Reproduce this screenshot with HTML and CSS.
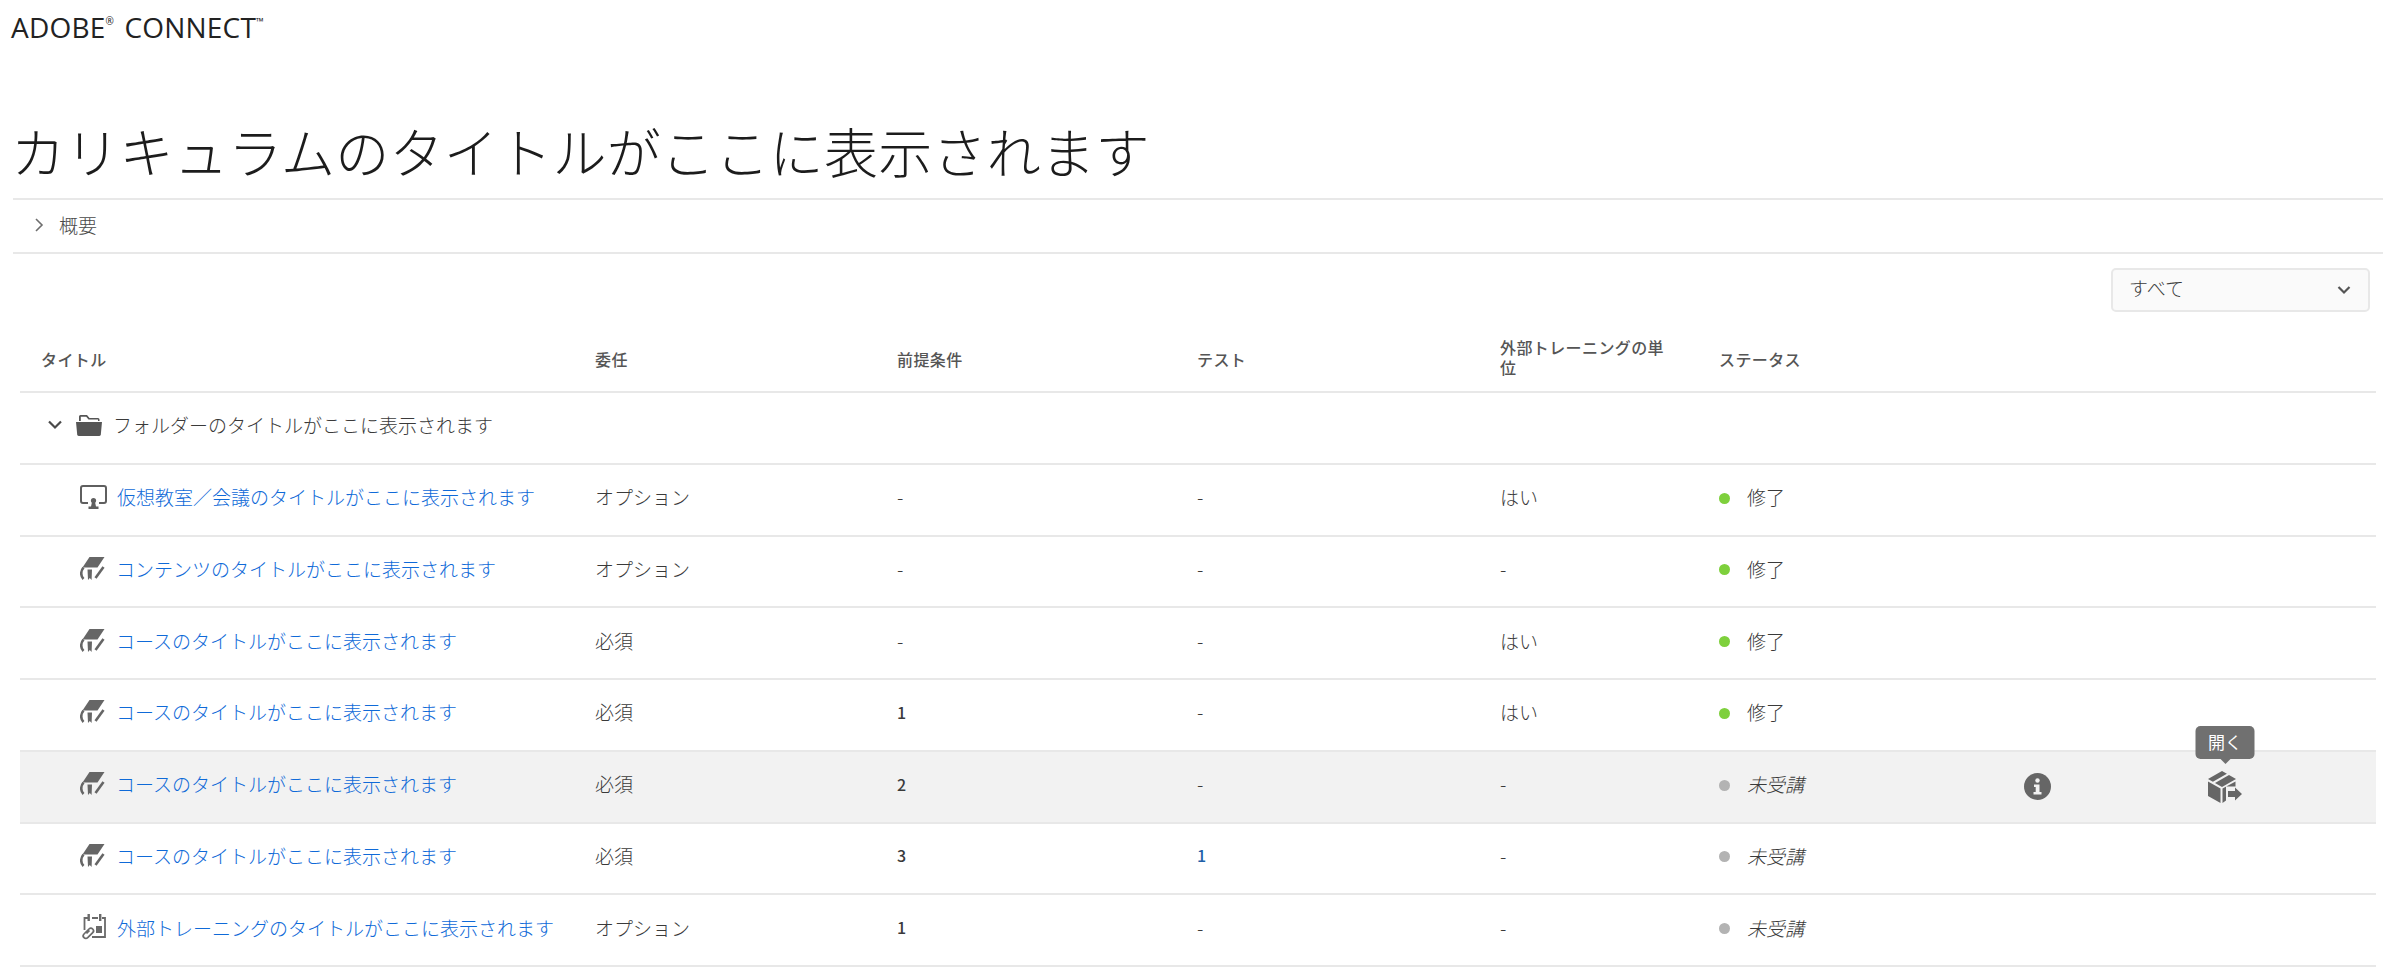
FILE: index.html
```html
<!DOCTYPE html>
<html lang="ja">
<head>
<meta charset="utf-8">
<title>Adobe Connect</title>
<link rel="stylesheet" href="styles.css">
</head>
<body>
<svg class="defs" width="0" height="0" aria-hidden="true">
  <symbol id="book" viewBox="0 0 25 25">
    <path d="M9.500 1H24.500l-7 10.500H2.500z" fill="#666"/>
    <path d="M3.500 11.500C.5 15 .5 20 3.500 23" fill="none" stroke="#666" stroke-width="2.600"/>
    <path d="M7.500 13.500h4.500l-.4 10.500-1.800-2-1.800 2z" fill="#666"/>
    <path d="M23.500 11 15.500 22" fill="none" stroke="#666" stroke-width="2.600"/>
  </symbol>
</svg>

<header class="brand">ADOBE<sup>®</sup> CONNECT<sup class="tm">™</sup></header>
<h1 class="page-title">カリキュラムのタイトルがここに表示されます</h1>

<div class="summary">
  <svg class="summary-chevron" viewBox="0 0 10 14" width="10" height="14"><path d="M2 1l6 6-6 6" fill="none" stroke="#6e6e6e" stroke-width="1.600"/></svg>
  <span>概要</span>
</div>

<div class="toolbar">
  <div class="select">
    <span>すべて</span>
    <svg viewBox="0 0 14 10" width="14" height="10"><path d="M1.500 2l5.500 5.500L12.500 2" fill="none" stroke="#555" stroke-width="2.200"/></svg>
  </div>
</div>

<div class="table">
  <div class="row head">
    <div class="cell title-head">タイトル</div>
    <div class="cell">委任</div>
    <div class="cell">前提条件</div>
    <div class="cell">テスト</div>
    <div class="cell credit">外部トレーニングの単位</div>
    <div class="cell">ステータス</div>
  </div>

  <div class="row folder">
    <div class="cell title">
      <svg class="folder-chevron" viewBox="0 0 14 10" width="14" height="10"><path d="M1 1.500l6 6 6-6" fill="none" stroke="#4a4a4a" stroke-width="2.200"/></svg>
      <svg class="ico folder-ico" viewBox="0 0 26 22" width="26" height="22"><path d="M3 7V2.500Q3 1 4.500 1h6.500l2.500 3H22q1.500 0 1.500 1.500V7h-1.500V5.500H12.500L10.200 2.800H4.800V7z" fill="#555"/><path d="M0 8h26l-1.200 12.500Q24.600 22 23 22H3q-1.600 0-1.800-1.500z" fill="#555"/></svg>
      <span>フォルダーのタイトルがここに表示されます</span>
    </div>
  </div>

  <div class="row">
    <div class="cell title">
      <svg class="ico monitor-ico" viewBox="0 0 27 24" width="27" height="24"><path d="M8 18H3q-2 0-2-2V3q0-2 2-2h21q2 0 2 2v13q0 2-2 2h-5" fill="none" stroke="#5f5f5f" stroke-width="2"/><circle cx="13.500" cy="15.500" r="2.600" fill="#5f5f5f"/><path d="M12 17h3l1 4.500h2.500V24H8.500v-2.500H11z" fill="#5f5f5f"/></svg>
      <a href="#">仮想教室／会議のタイトルがここに表示されます</a>
    </div>
    <div class="cell">オプション</div>
    <div class="cell">-</div>
    <div class="cell">-</div>
    <div class="cell">はい</div>
    <div class="cell status"><i class="dot done"></i>修了</div>
  </div>

  <div class="row">
    <div class="cell title"><svg class="ico" width="25" height="25"><use href="#book"/></svg><a href="#">コンテンツのタイトルがここに表示されます</a></div>
    <div class="cell">オプション</div>
    <div class="cell">-</div>
    <div class="cell">-</div>
    <div class="cell">-</div>
    <div class="cell status"><i class="dot done"></i>修了</div>
  </div>

  <div class="row">
    <div class="cell title"><svg class="ico" width="25" height="25"><use href="#book"/></svg><a href="#">コースのタイトルがここに表示されます</a></div>
    <div class="cell">必須</div>
    <div class="cell">-</div>
    <div class="cell">-</div>
    <div class="cell">はい</div>
    <div class="cell status"><i class="dot done"></i>修了</div>
  </div>

  <div class="row">
    <div class="cell title"><svg class="ico" width="25" height="25"><use href="#book"/></svg><a href="#">コースのタイトルがここに表示されます</a></div>
    <div class="cell">必須</div>
    <div class="cell num">1</div>
    <div class="cell">-</div>
    <div class="cell">はい</div>
    <div class="cell status"><i class="dot done"></i>修了</div>
  </div>

  <div class="row hover">
    <div class="cell title"><svg class="ico" width="25" height="25"><use href="#book"/></svg><a href="#">コースのタイトルがここに表示されます</a></div>
    <div class="cell">必須</div>
    <div class="cell num">2</div>
    <div class="cell">-</div>
    <div class="cell">-</div>
    <div class="cell status pending"><i class="dot"></i>未受講</div>
    <div class="cell action">
      <svg viewBox="0 0 27 27" width="27" height="27"><circle cx="13.500" cy="13.500" r="13.500" fill="#666"/><circle cx="13.500" cy="7.500" r="2.200" fill="#f2f2f2"/><path d="M10 11.500h5.500V19H17.500v2.500H9.500V19h2.200v-5H10z" fill="#f2f2f2"/></svg>
    </div>
    <div class="cell action">
      <div class="tooltip">開く</div>
      <svg viewBox="0 0 34 32" width="34" height="32"><path d="M0 8 14 0l4.900 2.800-14 8zM7 12 21 4l7 4-14 8z" fill="#666"/><path d="M0 10.500l12.500 7V32L0 25zM14.500 17.500l13-7v5H18V29.500L14.500 32z" fill="#666"/><path d="M20 20h7v-3.500l7 6.500-7 6.500V26h-7z" fill="#666"/></svg>
    </div>
  </div>

  <div class="row">
    <div class="cell title"><svg class="ico" width="25" height="25"><use href="#book"/></svg><a href="#">コースのタイトルがここに表示されます</a></div>
    <div class="cell">必須</div>
    <div class="cell num">3</div>
    <div class="cell num link">1</div>
    <div class="cell">-</div>
    <div class="cell status pending"><i class="dot"></i>未受講</div>
  </div>

  <div class="row">
    <div class="cell title">
      <svg class="ico" viewBox="0 0 26 27" width="26" height="27"><path d="M8 4H4.500v12M18 4h-6M22 4h3v19H12" fill="none" stroke="#6a6a6a" stroke-width="1.800"/><path d="M7.500 0h2.400v7H7.500zM19 0h2.400v7H19z" fill="#6a6a6a"/><rect x="16" y="12" width="6" height="7" fill="#6a6a6a"/><path d="M4 20l5-5a2.600 2.600 0 0 1 3.700 3.700l-5 5A2.600 2.600 0 0 1 4 20zM6.500 19.500l3-3" fill="none" stroke="#6a6a6a" stroke-width="1.700"/></svg>
      <a href="#">外部トレーニングのタイトルがここに表示されます</a>
    </div>
    <div class="cell">オプション</div>
    <div class="cell num">1</div>
    <div class="cell">-</div>
    <div class="cell">-</div>
    <div class="cell status pending"><i class="dot"></i>未受講</div>
  </div>
</div>
</body>
</html>
```

FILE: styles.css
```css
* { box-sizing: border-box; }

html, body { margin: 0; background: #fff; }

body {
  font-family: "Noto Sans CJK JP", "Noto Sans", sans-serif;
  font-size: 19px;
  font-weight: 300;
  color: #3a3a3a;
  height: 976px;
  overflow: hidden;
}

.defs { position: absolute; }

.brand {
  font-family: "Open Sans", sans-serif;
  font-weight: 400;
  font-size: 28px;
  line-height: 36px;
  color: #222;
  padding: 9px 0 0 11px;
  letter-spacing: .2px;
  height: 46px;
}

.brand sup { font-size: 10px; line-height: 0; vertical-align: 13px; margin-right: 3px; }
.brand .tm { margin-right: 0; }

.page-title {
  margin: 0;
  padding: 70px 0 0 11px;
  height: 152px;
  font-size: 54px;
  line-height: 70px;
  font-weight: 300;
  letter-spacing: .3px;
  color: #1c1c1c;
  white-space: nowrap;
}

.summary {
  margin: 0 21px 0 13px;
  height: 56px;
  border-top: 2px solid #e8e8e8;
  border-bottom: 2px solid #e8e8e8;
  display: flex;
  align-items: center;
  gap: 15px;
  padding: 0 0 3px 21px;
  font-size: 19px;
  color: #4a4a4a;
}

.toolbar {
  display: flex;
  justify-content: flex-end;
  padding: 14px 34px 0 0;
  height: 67px;
}

.select {
  width: 259px;
  height: 44px;
  border: 2px solid #e8e8e8;
  border-radius: 5px;
  background: #fafafa;
  display: flex;
  align-items: center;
  justify-content: space-between;
  padding: 0 17px 0 16px;
  font-size: 19px;
  color: #3a3a3a;
}

.select span { padding-bottom: 5px; }

.table { margin: 0 28px 0 20px; }

.row {
  display: grid;
  grid-template-columns: 575px 302px 300px 303px 219px 231px 174px 202px 50px;
  height: 71.75px;
  border-bottom: 2px solid #e8e8e8;
  align-items: center;
}

.cell { position: relative; white-space: nowrap; padding-bottom: 6px; }

.head {
  height: 72px;
  font-size: 16px;
  font-weight: 500;
  color: #555;
  letter-spacing: .4px;
}

.head .cell { padding-top: 6px; padding-bottom: 0; }
.head .title-head { padding-left: 21px; }
.head .credit { white-space: normal; padding-right: 48px; line-height: 20px; padding-top: 2px; }

.title { display: flex; align-items: center; padding-left: 60px; }
.title a { color: #0f6ad8; text-decoration: none; }
.ico { flex: none; margin-right: 11px; }
.monitor-ico { margin-right: 10px; }

.folder .title { padding-left: 28px; }
.folder-chevron { margin-right: 14px; }
.folder-ico { margin-right: 11px; }

.num { font-weight: 500; font-size: 16px; }
.link { color: #1f5fa8; }

.status { display: flex; align-items: center; }
.dot { width: 11px; height: 11px; border-radius: 50%; background: #b3b3b3; margin-right: 17px; margin-top: 3px; }
.dot.done { background: #7ed03c; }
.pending { font-style: italic; }

.hover { background: #f2f2f2; }

.action { display: flex; justify-content: center; align-items: center; padding-bottom: 0; }
.action svg { display: block; }

.tooltip {
  position: absolute;
  left: 50%;
  bottom: 44px;
  transform: translateX(-50%);
  width: 59px;
  height: 33px;
  border-radius: 5px;
  background: #707070;
  color: #fff;
  font-size: 17px;
  font-weight: 400;
  line-height: 31px;
  text-align: center;
}

.tooltip::after {
  content: "";
  position: absolute;
  left: 50%;
  top: 100%;
  margin-left: -5px;
  border: 5px solid transparent;
  border-bottom: 0;
  border-top-color: #707070;
}
```
